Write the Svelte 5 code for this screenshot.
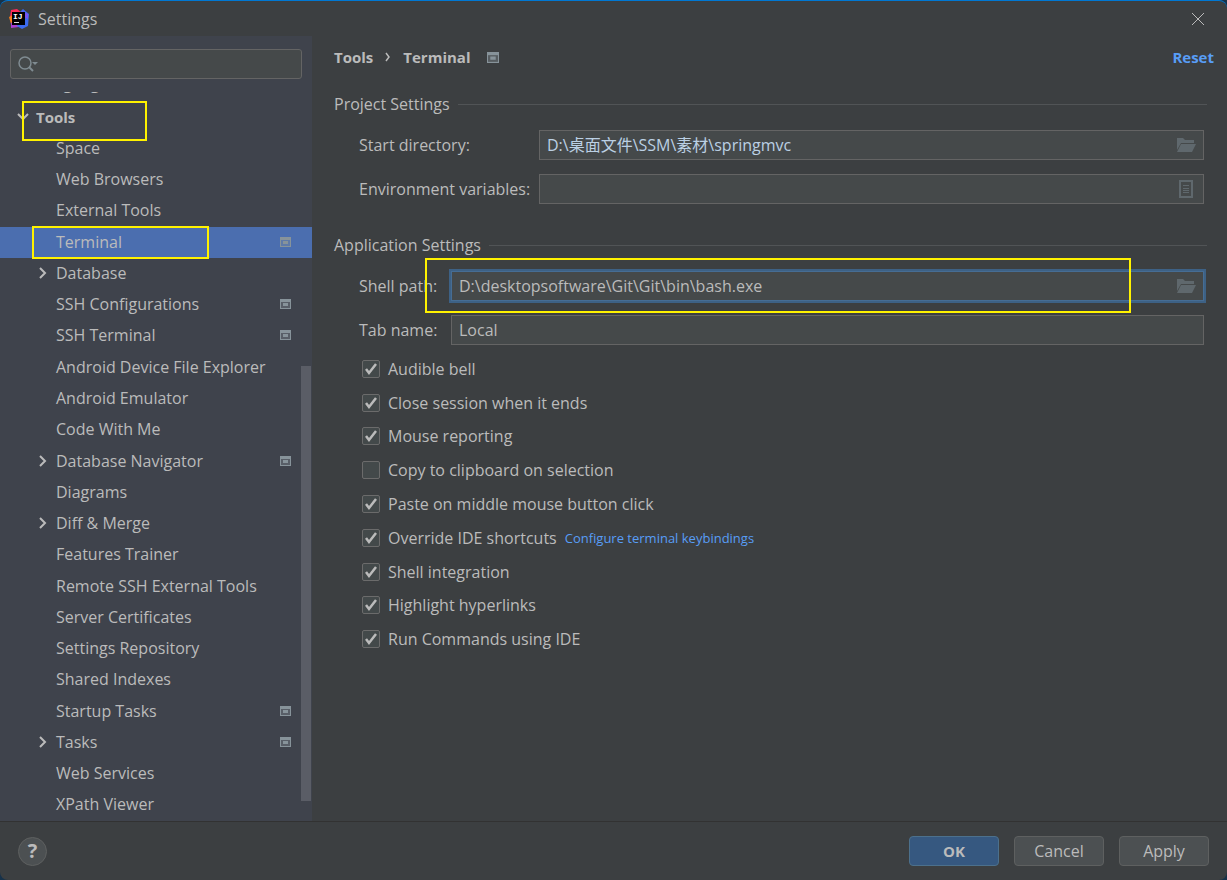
<script lang="ts">
  type TreeItem = { label: string; group?: boolean; project?: boolean; selected?: boolean };

  const tree: TreeItem[] = [
    { label: 'Space' },
    { label: 'Web Browsers' },
    { label: 'External Tools' },
    { label: 'Terminal', project: true, selected: true },
    { label: 'Database', group: true },
    { label: 'SSH Configurations', project: true },
    { label: 'SSH Terminal', project: true },
    { label: 'Android Device File Explorer' },
    { label: 'Android Emulator' },
    { label: 'Code With Me' },
    { label: 'Database Navigator', group: true, project: true },
    { label: 'Diagrams' },
    { label: 'Diff & Merge', group: true },
    { label: 'Features Trainer' },
    { label: 'Remote SSH External Tools' },
    { label: 'Server Certificates' },
    { label: 'Settings Repository' },
    { label: 'Shared Indexes' },
    { label: 'Startup Tasks', project: true },
    { label: 'Tasks', group: true, project: true },
    { label: 'Web Services' },
    { label: 'XPath Viewer' },
  ];

  let options = $state([
    { label: 'Audible bell', checked: true },
    { label: 'Close session when it ends', checked: true },
    { label: 'Mouse reporting', checked: true },
    { label: 'Copy to clipboard on selection', checked: false },
    { label: 'Paste on middle mouse button click', checked: true },
    { label: 'Override IDE shortcuts', checked: true, link: 'Configure terminal keybindings' },
    { label: 'Shell integration', checked: true },
    { label: 'Highlight hyperlinks', checked: true },
    { label: 'Run Commands using IDE', checked: true },
  ]);

  let query = $state('');
  let startDirectory = $state('D:\\桌面文件\\SSM\\素材\\springmvc');
  let environment = $state('');
  let shellPath = $state('D:\\desktopsoftware\\Git\\Git\\bin\\bash.exe');
  let tabName = $state('Local');
</script>

{#snippet projectIcon()}
  <svg class="project-icon" viewBox="0 0 11 10" aria-hidden="true">
    <path fill="currentColor" fill-rule="evenodd" d="M0 0h11v10H0zM1 3v6h9V3z" />
    <path fill="currentColor" opacity="0.35" d="M1 3h9v6H1z" />
    <path fill="currentColor" d="M3 4h5v3H3z" />
  </svg>
{/snippet}

{#snippet folderIcon()}
  <svg width="20" height="16" viewBox="0 0 20 16" aria-hidden="true">
    <path fill="currentColor" d="M1 1h6l2 2h9v3H5L1 13z" />
    <path fill="currentColor" d="M5 7h15l-4 8H1z" />
  </svg>
{/snippet}

<div class="window">
  <header class="titlebar">
    <svg class="logo" viewBox="0 0 20 20" aria-hidden="true">
      <path fill="#fe2857" d="M2 1l6-1 5 4-3 9-9-5z" />
      <path fill="#fc801d" d="M0 8l4-2 2 7-4 2z" />
      <path fill="#a83fd0" d="M2 14l8-4v8l-8 1z" />
      <path fill="#3c6bef" d="M11 3l3-3 6 5-1 12-6 3-5-3z" />
      <path fill="#7a52f0" d="M13 2l6 3v5l-6-3z" />
      <path d="M3 3h13v13H3z" />
      <path fill="#ddd" d="M5 13h5v1H5z" />
      <text x="4" y="10" fill="#fff" font-size="8" font-weight="700">IJ</text>
    </svg>
    <span>Settings</span>
    <button class="close" aria-label="Close">
      <svg width="14" height="14" viewBox="0 0 14 14" aria-hidden="true">
        <path fill="none" stroke="currentColor" d="M1 1l12 12M13 1L1 13" />
      </svg>
    </button>
  </header>

  <div class="body">
    <aside class="sidebar">
      <label class="search">
        <svg width="20" height="16" viewBox="0 0 20 16" aria-hidden="true">
          <circle cx="7" cy="7" r="6" fill="none" stroke="currentColor" stroke-width="1.5" />
          <path fill="none" stroke="currentColor" stroke-width="2" d="M11 11l4 4" />
          <path fill="currentColor" d="M14 6h6l-3 3z" />
        </svg>
        <input type="text" bind:value={query} aria-label="Search settings" />
      </label>

      <nav class="tree">
        <div class="clipped">Languages &amp; Frameworks</div>
        <button class="row root marked">
          <svg class="chevron" viewBox="0 0 12 12" aria-hidden="true">
            <path fill="none" stroke="currentColor" stroke-width="2" d="M1 3l5 5 5-5" />
          </svg>
          <span>Tools</span>
        </button>
        {#each tree as item (item.label)}
          <button class="row" class:selected={item.selected} class:marked={item.selected}>
            {#if item.group}
              <svg class="chevron" viewBox="0 0 12 12" aria-hidden="true">
                <path fill="none" stroke="currentColor" stroke-width="2" d="M3 1l5 5-5 5" />
              </svg>
            {/if}
            <span>{item.label}</span>
            {#if item.project}{@render projectIcon()}{/if}
          </button>
        {/each}
      </nav>
      <div class="scrollbar"></div>
    </aside>

    <main class="content">
      <div class="breadcrumb">
        <span>Tools</span>
        <svg width="6" height="10" viewBox="0 0 6 10" aria-hidden="true">
          <path fill="none" stroke="currentColor" stroke-width="1.5" d="M1 1l3 4-3 4" />
        </svg>
        <span>Terminal</span>
        {@render projectIcon()}
        <a class="reset" href="#reset">Reset</a>
      </div>

      <section>
        <h2>Project Settings</h2>
        <div class="form project">
          <label for="start-directory">Start directory:</label>
          <div class="field path">
            <input id="start-directory" type="text" bind:value={startDirectory} />
            <button aria-label="Browse">{@render folderIcon()}</button>
          </div>
          <label for="environment">Environment variables:</label>
          <div class="field">
            <input id="environment" type="text" bind:value={environment} />
            <button aria-label="Edit variables">
              <svg width="20" height="18" viewBox="0 0 20 18" aria-hidden="true">
                <path fill="none" stroke="currentColor" stroke-width="2" d="M4 1h12v16H4z" />
                <path stroke="currentColor" d="M7 5.5h6M7 8.5h6M7 10.5h6M7 12.5h6" />
              </svg>
            </button>
          </div>
        </div>
      </section>

      <section>
        <h2>Application Settings</h2>
        <div class="form application">
          <label for="shell-path">Shell path:</label>
          <div class="field focused">
            <input id="shell-path" type="text" bind:value={shellPath} />
            <button aria-label="Browse">{@render folderIcon()}</button>
          </div>
          <label for="tab-name">Tab name:</label>
          <div class="field">
            <input id="tab-name" type="text" bind:value={tabName} />
          </div>
          <div class="highlight"></div>
        </div>

        <div class="options">
          {#each options as option (option.label)}
            <div class="option">
              <label>
                <span class="check">
                  <input type="checkbox" bind:checked={option.checked} />
                  <svg viewBox="0 0 18 18" aria-hidden="true">
                    <path fill="none" stroke="currentColor" stroke-width="2.5" d="M4 9l3 4 7-9" />
                  </svg>
                </span>
                <span>{option.label}</span>
              </label>
              {#if option.link}<a href="#keybindings">{option.link}</a>{/if}
            </div>
          {/each}
        </div>
      </section>
    </main>
  </div>

  <footer class="footer">
    <button class="help" aria-label="Help">?</button>
    <button class="action primary">OK</button>
    <button class="action">Cancel</button>
    <button class="action">Apply</button>
  </footer>
</div>

<style>
  :global(body) {
    background: #17324a;
  }

  * {
    box-sizing: border-box;
  }

  .window {
    display: flex;
    flex-direction: column;
    min-height: 100vh;
    overflow: hidden;
    border-top: 1px solid #0078d4;
    border-radius: 8px;
    background: #3c3f41;
    color: #bbbbbb;
    font-family: 'Open Sans', 'Noto Sans CJK SC', sans-serif;
    font-size: 16px;
    line-height: 20px;
  }

  button,
  input {
    margin: 0;
    padding: 0;
    border: 0;
    background: none;
    color: inherit;
    font: inherit;
    outline: none;
  }

  a {
    color: #589df6;
    text-decoration: none;
  }

  svg {
    display: block;
    flex: none;
  }

  .titlebar {
    display: flex;
    align-items: center;
    gap: 9px;
    height: 35px;
    padding: 0 22px 0 9px;
  }

  .logo {
    width: 20px;
    height: 20px;
    font-family: 'Liberation Mono', monospace;
  }

  .close {
    margin-left: auto;
  }

  .body {
    display: flex;
    flex: 1;
  }

  .sidebar {
    position: relative;
    display: flex;
    flex: none;
    flex-direction: column;
    width: 312px;
    padding-top: 13px;
    background: #3f434c;
  }

  .search {
    display: flex;
    align-items: center;
    gap: 4px;
    height: 30px;
    margin: 0 10px;
    padding: 0 7px;
    border: 1px solid #646464;
    border-radius: 3px;
    background: #45494a;
    color: #7f8b91;
  }

  .search input {
    flex: 1;
    min-width: 0;
    color: #bbbbbb;
  }

  .tree {
    display: flex;
    flex: 1;
    flex-direction: column;
    padding-top: 13px;
  }

  /* last visible pixels of the row that is scrolled out at the top */
  .clipped {
    display: flex;
    flex: none;
    align-items: flex-end;
    height: 10px;
    padding: 0 0 8px 36px;
    overflow: hidden;
    font-size: 15px;
    font-weight: 700;
  }

  .row {
    position: relative;
    display: flex;
    flex: 1 0 auto;
    align-items: center;
    padding: 0 21px 2px 56px;
    text-align: left;
  }

  .root {
    padding-left: 36px;
    font-size: 15px;
    font-weight: 700;
  }

  .selected {
    background: #4b6eaf;
  }

  .chevron {
    position: absolute;
    left: 37px;
    width: 12px;
    height: 12px;
  }

  .root .chevron {
    left: 17px;
  }

  .marked::after {
    position: absolute;
    inset: -1px 103px -1px 32px;
    border: 2px solid #fff200;
    content: '';
  }

  .root::after {
    inset: -1px 165px -8px 22px;
  }

  .project-icon {
    width: 12px;
    height: 11px;
    color: #87939a;
  }

  .row .project-icon {
    width: 11px;
    height: 10px;
    margin-left: auto;
  }

  .scrollbar {
    position: absolute;
    top: 42%;
    right: 1px;
    bottom: 20px;
    width: 10px;
    background: #5a5d66;
  }

  .content {
    flex: 1;
    min-width: 0;
    padding: 11px 20px 0 22px;
  }

  .breadcrumb {
    display: flex;
    align-items: center;
    gap: 12px;
    margin-right: -7px;
    font-size: 15px;
    font-weight: 700;
  }

  .breadcrumb .project-icon {
    margin-left: 5px;
  }

  .reset {
    margin-left: auto;
  }

  section {
    padding-top: 27px;
  }

  h2 {
    display: flex;
    align-items: center;
    gap: 8px;
    margin: 0;
    font-size: 16px;
    font-weight: 400;
  }

  h2::after {
    flex: 1;
    height: 1px;
    background: #515456;
    content: '';
  }

  .form {
    position: relative;
    display: grid;
    align-items: center;
    gap: 14px 0;
    padding: 16px 3px 4px 25px;
  }

  .project {
    grid-template-columns: 180px 1fr;
  }

  .application {
    grid-template-columns: 92px 1fr;
    padding-bottom: 0;
  }

  .field {
    display: flex;
    align-items: center;
    height: 30px;
    padding: 0 7px;
    border: 1px solid #646464;
    background: #45494a;
  }

  .path {
    color: #bbd0e4;
  }

  .field input {
    flex: 1;
    min-width: 0;
  }

  .field button {
    color: #5f686d;
  }

  .focused {
    border-color: #466d94;
    box-shadow: 0 0 0 2px #3d6185;
  }

  .highlight {
    position: absolute;
    top: 3px;
    right: 76px;
    left: 91px;
    height: 55px;
    border: 2px solid #fff200;
  }

  .options {
    display: grid;
    grid-auto-rows: 1fr;
    height: 304px;
    margin-top: 7px;
    padding-left: 28px;
  }

  .option,
  .option label {
    display: flex;
    align-items: center;
  }

  .option {
    gap: 8px;
  }

  .option label {
    gap: 8px;
  }

  .option a {
    font-size: 13px;
  }

  .check {
    display: grid;
    width: 18px;
    height: 18px;
  }

  .check input,
  .check svg {
    grid-area: 1 / 1;
    width: 18px;
    height: 18px;
  }

  .check input {
    border: 1px solid #6b6b6b;
    border-radius: 2px;
    background: #43494a;
    appearance: none;
  }

  .check svg {
    visibility: hidden;
    pointer-events: none;
  }

  .check input:checked + svg {
    visibility: visible;
  }

  .footer {
    display: flex;
    align-items: center;
    gap: 15px;
    height: 59px;
    padding: 0 18px;
    border-top: 1px solid #323232;
  }

  .help {
    width: 29px;
    height: 29px;
    margin-right: auto;
    border: 1px solid #5e6060;
    border-radius: 50%;
    background: #4c5052;
    font-size: 20px;
    font-weight: 700;
  }

  .action {
    width: 90px;
    height: 30px;
    border: 1px solid #5e6060;
    border-radius: 4px;
    background: #4c5052;
  }

  .primary {
    border-color: #4c708c;
    background: #365880;
    font-size: 15px;
    font-weight: 700;
  }
</style>
